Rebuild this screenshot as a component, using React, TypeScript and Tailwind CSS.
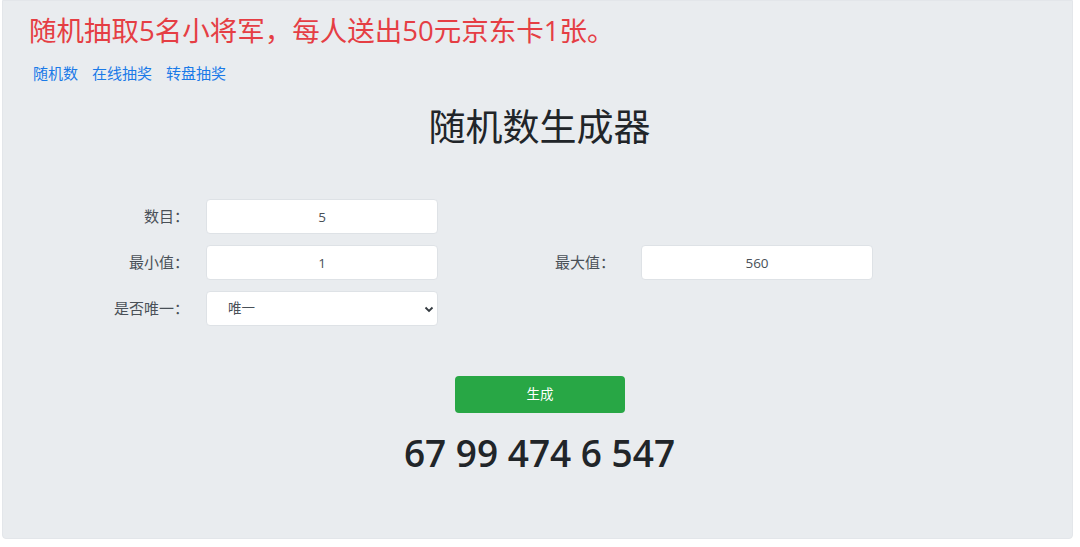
import React from 'react';

const font = { fontFamily: '"Open Sans", "Noto Sans CJK SC", sans-serif' };

const Field: React.FC<{ label: string; children: React.ReactNode }> = ({ label, children }) => (
  <div className="flex items-center">
    <label className="w-[186px] text-right text-[15px] text-[#495057]">{label}</label>
    <div className="ml-[17px] w-[232px]">{children}</div>
  </div>
);

const Input: React.FC<{ value: string }> = ({ value }) => (
  <input
    readOnly
    value={value}
    className="h-[35px] w-full rounded-[4px] border border-[#dee2e6] bg-white text-center text-[13.5px] text-[#495057] outline-none"
  />
);

const App: React.FC = () => {
  return (
    <div className="h-[547px] w-[1080px] bg-white" style={font}>
      <div className="mx-[2px] h-[539px] w-[1071px] rounded-b-[4px] border border-[#e3e6ea] bg-[#e9ecef] pt-[10px]">
        <h2 className="pl-[26px] text-[27.5px] leading-[40px] text-[#e53e44]">
          随机抽取5名小将军，每人送出50元京东卡1张。
        </h2>
        <div className="mt-[12px] flex gap-[14px] pl-[30px] text-[15px] leading-[20px] text-[#1a7ae8]">
          <a>随机数</a>
          <a>在线抽奖</a>
          <a>转盘抽奖</a>
        </div>
        <h1 className="mt-[19px] pl-[4px] text-center text-[37px] leading-[50px] text-[#212529]">随机数生成器</h1>
        <div className="mt-[47px] flex flex-col gap-[11px]">
          <Field label="数目：">
            <Input value="5" />
          </Field>
          <div className="flex">
            <Field label="最小值：">
              <Input value="1" />
            </Field>
            <div className="flex items-center">
              <label className="w-[177px] text-right text-[15px] text-[#495057]">最大值：</label>
              <div className="ml-[26px] w-[232px]">
                <Input value="560" />
              </div>
            </div>
          </div>
          <Field label="是否唯一：">
            <div className="relative">
              <div className="flex h-[35px] w-full items-center rounded-[4px] border border-[#dee2e6] bg-white pl-[21px] text-[13.5px] text-[#495057]">
                唯一
              </div>
              <svg
                className="absolute right-[4px] top-[14px]"
                width="10"
                height="8"
                viewBox="0 0 10 8"
                fill="none"
                stroke="#343a40"
                strokeWidth="1.8"
              >
                <path d="M1.5 2.5 L5 6 L8.5 2.5" />
              </svg>
            </div>
          </Field>
        </div>
        <div className="mt-[50px] flex justify-center">
          <button className="ml-[5px] h-[37px] w-[170px] rounded-[4px] bg-[#28a745] text-[13.5px] text-white">生成</button>
        </div>
        <div className="mt-[15px] pl-[4px] text-center text-[37px] font-semibold leading-[50px] text-[#212529]">
          67 99 474 6 547
        </div>
      </div>
    </div>
  );
};

export default App;
